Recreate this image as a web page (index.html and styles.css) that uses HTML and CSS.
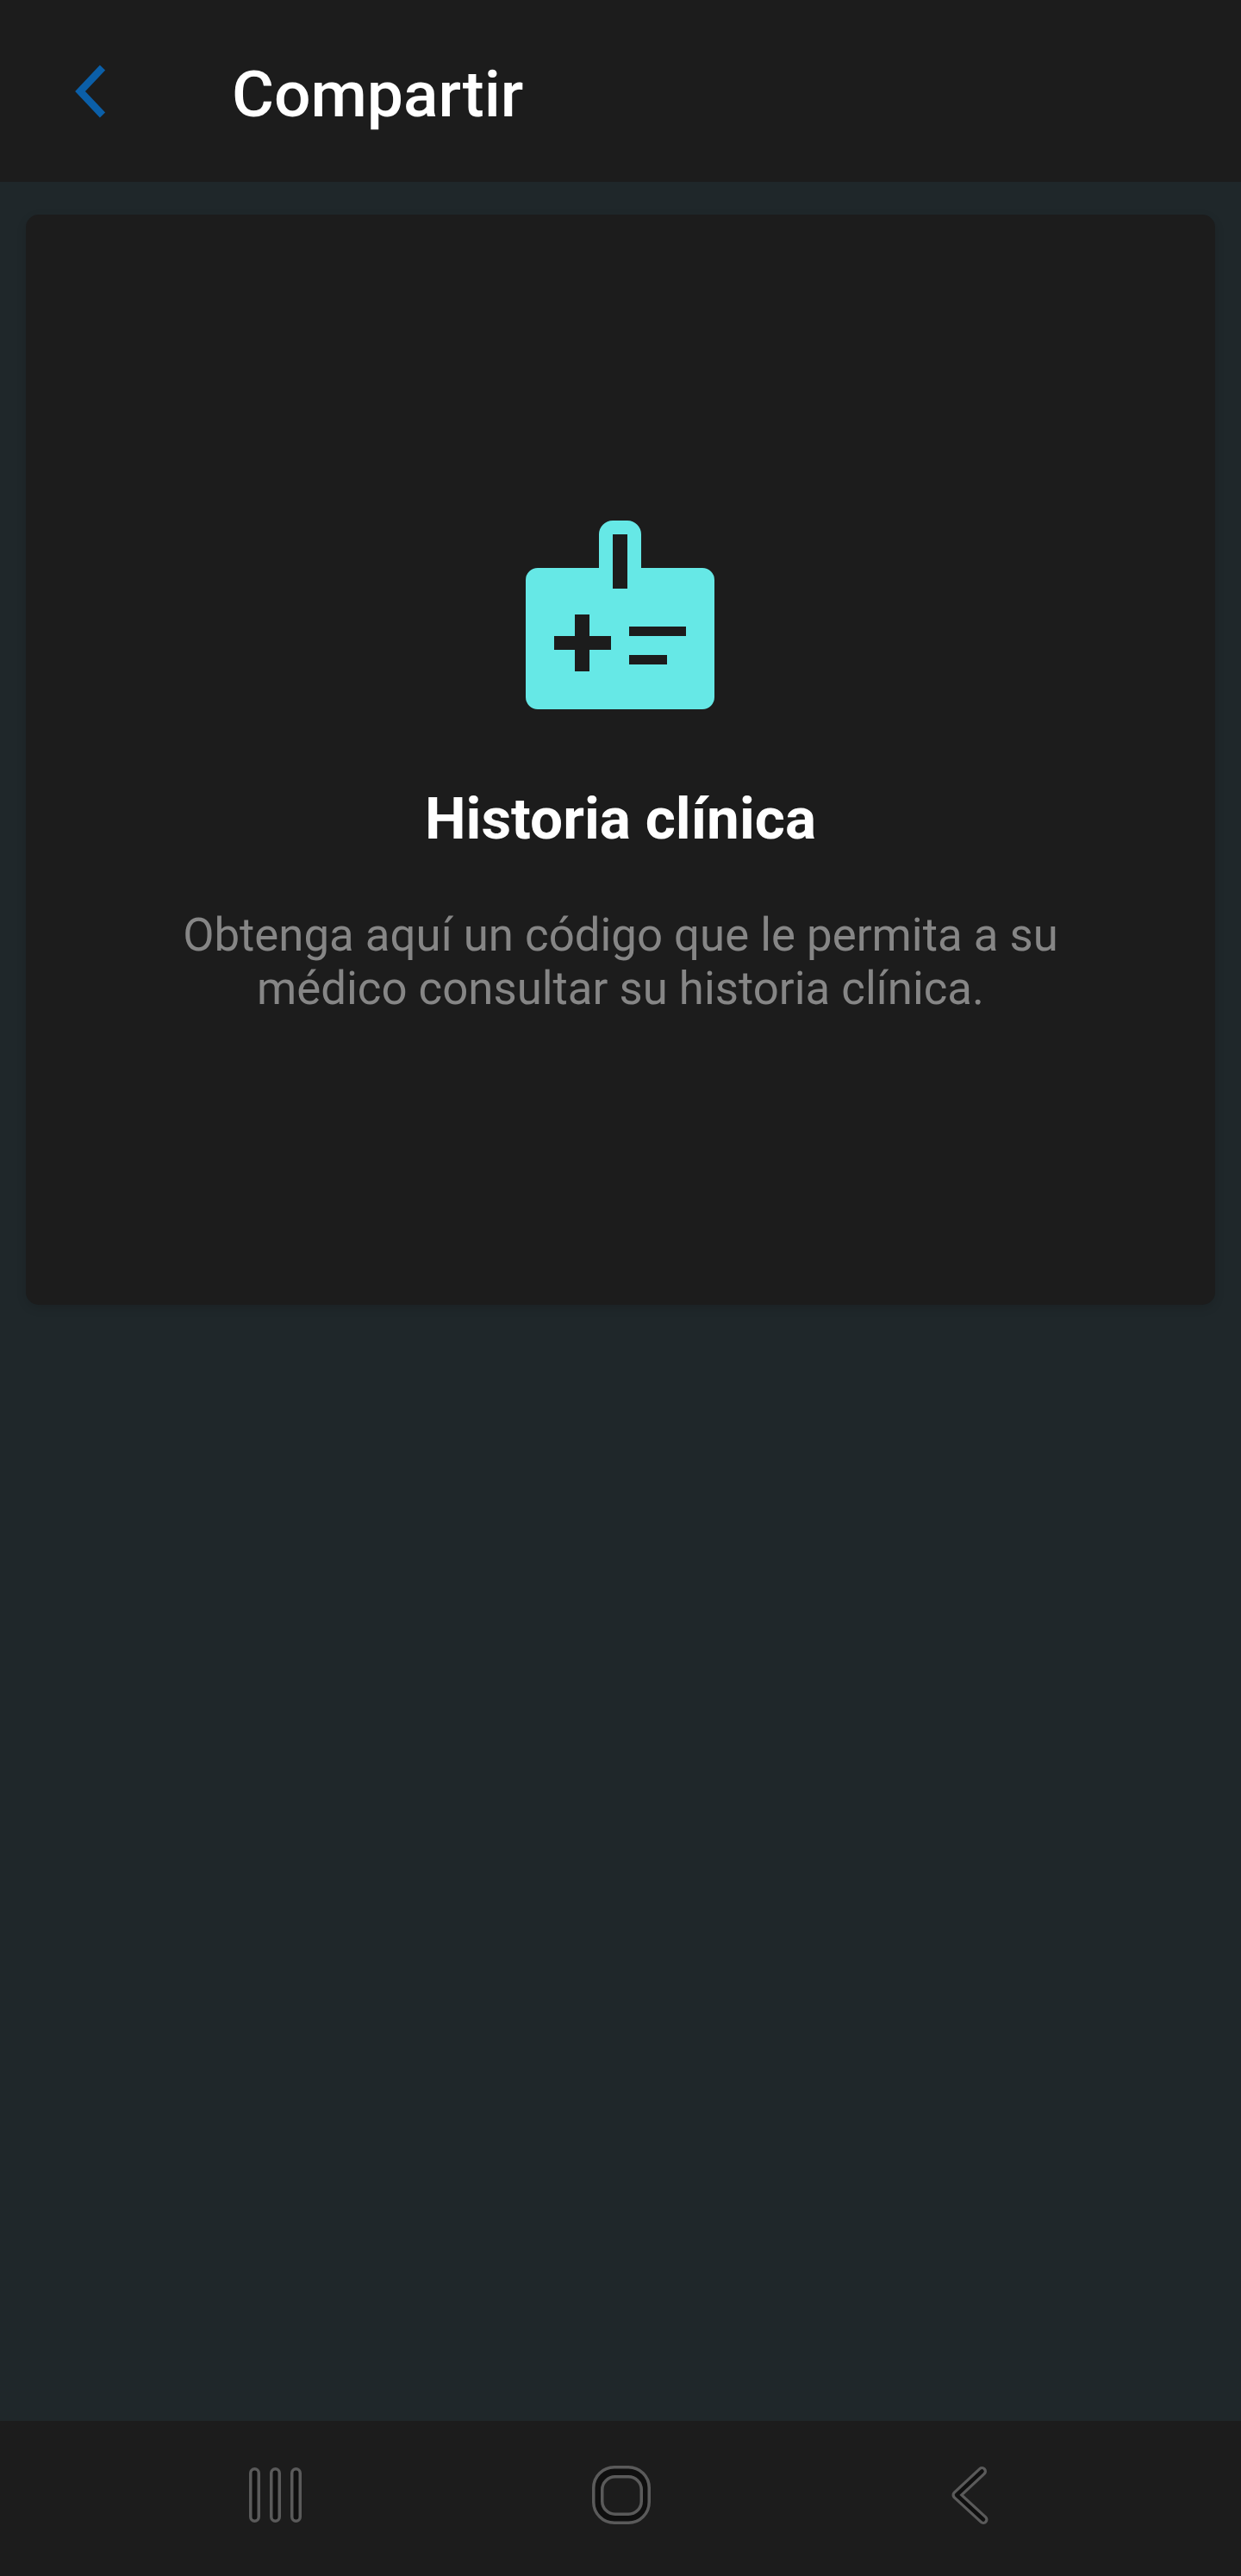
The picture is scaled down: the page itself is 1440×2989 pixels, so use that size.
FILE: index.html
```html
<!DOCTYPE html>
<html lang="es">
<head>
<meta charset="utf-8">
<title>Compartir</title>
<link rel="stylesheet" href="styles.css">
</head>
<body>
<div class="page">
  <header class="topbar">
    <svg class="back" width="36" height="62" viewBox="0 0 36 62" aria-hidden="true">
      <path d="M32 3.500 L6 31 L32 58.500" fill="none" stroke="#0b5fa8" stroke-width="8.500"/>
    </svg>
    <h1 class="title">Compartir</h1>
  </header>
  <main class="content">
    <section class="card">
      <svg class="card-icon" width="219" height="219" viewBox="0 0 219 219" aria-hidden="true">
        <path fill="#66e8e6" fill-rule="evenodd" d="M14 55H85V16A16 16 0 0 1 101 0H118A16 16 0 0 1 134 16V55H205A14 14 0 0 1 219 69V205A14 14 0 0 1 205 219H14A14 14 0 0 1 0 205V69A14 14 0 0 1 14 55ZM101 16V79H118V16ZM57 109V134H33V150H57V175H74V150H99V134H74V109ZM120 123V134H186V123ZM120 156V167H164V156Z"/>
      </svg>
      <h2 class="card-title">Historia clínica</h2>
      <p class="card-text">Obtenga aquí un código que le permita a su<br>médico consultar su historia clínica.</p>
    </section>
  </main>
  <nav class="navbar">
    <svg class="nav-recent" width="61" height="68" viewBox="0 0 61 68" aria-hidden="true">
      <g fill="#0f0f0f" stroke="#5a5a5a" stroke-width="3.500">
        <rect x="1.750" y="3.750" width="9.500" height="60.500" rx="4.750"/>
        <rect x="25.750" y="3.750" width="9.500" height="60.500" rx="4.750"/>
        <rect x="49.750" y="3.750" width="9.500" height="60.500" rx="4.750"/>
      </g>
    </svg>
    <svg class="nav-home" width="68" height="68" viewBox="0 0 68 68" aria-hidden="true">
      <rect x="1.750" y="1.750" width="64.500" height="64.500" rx="24" fill="#0f0f0f" stroke="#5a5a5a" stroke-width="3.500"/>
      <rect x="11.750" y="12.750" width="45.500" height="43.500" rx="15" fill="#1c1c1c" stroke="#5a5a5a" stroke-width="3.500"/>
    </svg>
    <svg class="nav-back" width="45" height="68" viewBox="0 0 45 68" aria-hidden="true">
      <path d="M37.500 6.500 L8 34 L39 62.500" fill="none" stroke="#5a5a5a" stroke-width="11" stroke-linecap="round" stroke-linejoin="round"/>
      <path d="M37.500 6.500 L8 34 L39 62.500" fill="none" stroke="#0f0f0f" stroke-width="4.500" stroke-linecap="round" stroke-linejoin="round"/>
    </svg>
  </nav>
</div>
</body>
</html>
```
FILE: styles.css
```css
* { box-sizing: border-box; }
html, body { margin: 0; padding: 0; }
body {
  background: #1f272a;
  font-family: Roboto, "Noto Sans", sans-serif;
}
.page {
  display: flex;
  flex-direction: column;
  min-height: 100vh;
}
.topbar {
  display: flex;
  align-items: center;
  height: 211px;
  padding-left: 87px;
  background: #1c1c1c;
}
.back { flex: none; }
.title {
  margin: 6px 0 0 146px;
  font-size: 75px;
  font-weight: 500;
  line-height: 88px;
  color: #fff;
}
.content {
  flex: 1;
  padding: 38px 30px;
}
.card {
  display: flex;
  flex-direction: column;
  align-items: center;
  height: 1265px;
  padding-top: 355px;
  background: #1c1c1c;
  border-radius: 15px;
  box-shadow: 0 4px 12px rgba(0, 0, 0, 0.12);
}
.card-icon {
  flex: none;
  margin-right: 1px;
}
.card-title {
  margin: 88px 0 0;
  font-size: 67.500px;
  font-weight: 700;
  line-height: 78px;
  color: #fff;
}
.card-text {
  margin: 65px 0 0;
  font-size: 52.750px;
  line-height: 62px;
  text-align: center;
  color: #868686;
}
.navbar {
  display: flex;
  align-items: flex-start;
  height: 180px;
  padding: 52px 0 0 289px;
  background: #1c1c1c;
}
.nav-home { margin-left: 337px; }
.nav-back { margin-left: 347px; }
```
